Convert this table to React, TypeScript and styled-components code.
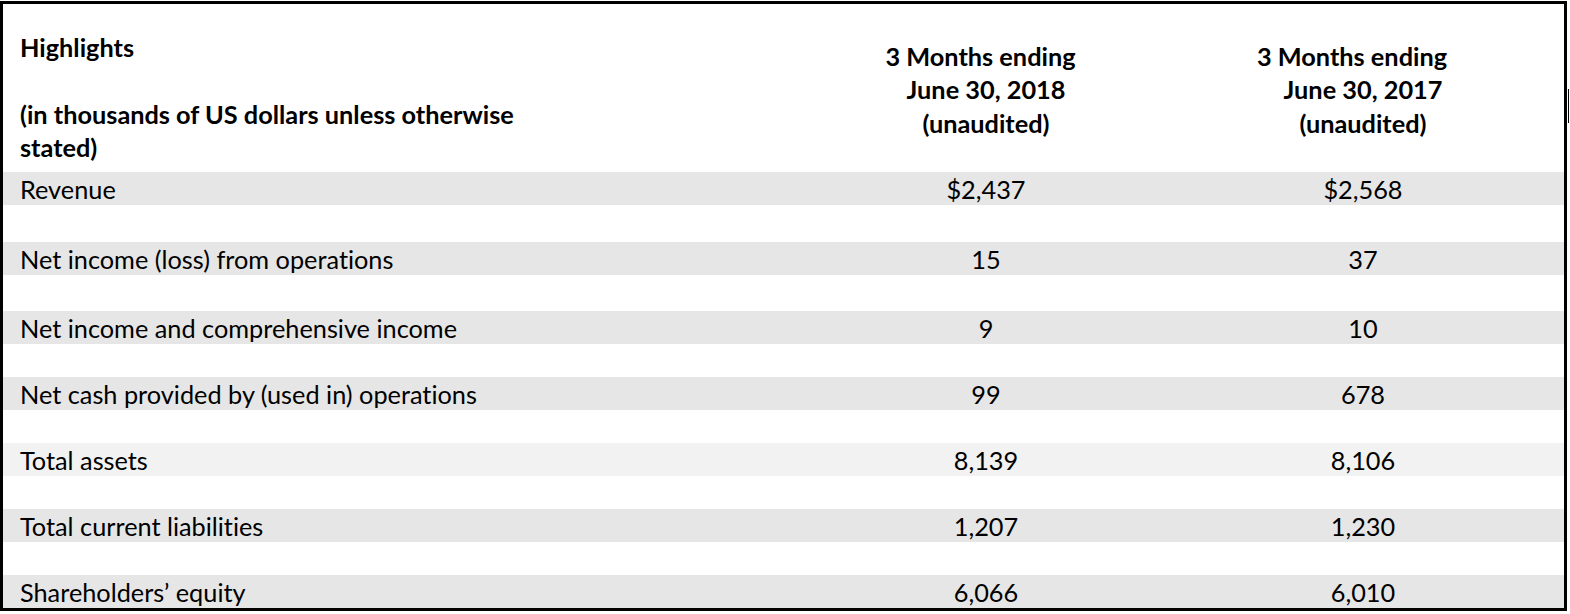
import React from "react";
import styled, { createGlobalStyle } from "styled-components";

const GlobalStyle = createGlobalStyle`
  html, body {
    margin: 0;
    padding: 0;
    background: #ffffff;
  }
  body {
    font-family: Lato, "Open Sans", "Liberation Sans", sans-serif;
    font-variant-ligatures: none;
    font-feature-settings: "liga" 0, "clig" 0;
    color: #000000;
  }
`;

const Page = styled.div`
  position: relative;
  width: 1570px;
  height: 614px;
  padding-top: 1px;
  box-sizing: border-box;
  overflow: hidden;
`;

const Table = styled.div`
  width: 1567px;
  box-sizing: border-box;
  border: 3px solid #000000;
  display: grid;
  grid-template-columns: 807px 352px 402px;
  font-size: 25.3px;
`;

const HeaderCell = styled.div<{ $align: "left" | "center"; $top: number }>`
  display: flex;
  flex-direction: column;
  align-items: ${(p) => (p.$align === "left" ? "flex-start" : "center")};
  padding-top: ${(p) => p.$top}px;
  padding-left: ${(p) => (p.$align === "left" ? 17 : 0)}px;
  height: 168px;
  box-sizing: border-box;
  font-weight: 700;
  line-height: 33.4px;
`;

const HeaderLine = styled.span<{ $shift?: number }>`
  display: block;
  white-space: pre;
  padding-right: ${(p) => (p.$shift && p.$shift < 0 ? -2 * p.$shift : 0)}px;
  padding-left: ${(p) => (p.$shift && p.$shift > 0 ? 2 * p.$shift : 0)}px;
`;

const BlankLine = styled.span`
  display: block;
  height: 33.4px;
`;

const Band = styled.div<{ $tone: "mid" | "light" }>`
  grid-column: 1 / -1;
  display: grid;
  grid-template-columns: subgrid;
  height: 33px;
  align-items: center;
  background: ${(p) => (p.$tone === "light" ? "#f2f2f2" : "#e6e6e6")};
`;

const LabelCell = styled.div`
  padding-left: 17px;
  white-space: nowrap;
`;

const ValueCell = styled.div`
  text-align: center;
  white-space: nowrap;
`;

const Spacer = styled.div<{ $h: number }>`
  grid-column: 1 / -1;
  height: ${(p) => p.$h}px;
`;

const CaretMark = styled.div`
  position: absolute;
  left: 1568px;
  top: 89px;
  width: 1px;
  height: 34px;
  background: #000000;
`;

type Row = {
  label: string;
  a: string;
  b: string;
  tone: "mid" | "light";
  gap: number;
};

const rows: Row[] = [
  { label: "Revenue", a: "$2,437", b: "$2,568", tone: "mid", gap: 37 },
  { label: "Net income (loss) from operations", a: "15", b: "37", tone: "mid", gap: 36 },
  { label: "Net income and comprehensive income", a: "9", b: "10", tone: "mid", gap: 33 },
  { label: "Net cash provided by (used in) operations", a: "99", b: "678", tone: "mid", gap: 33 },
  { label: "Total assets", a: "8,139", b: "8,106", tone: "light", gap: 33 },
  { label: "Total current liabilities", a: "1,207", b: "1,230", tone: "mid", gap: 33 },
  { label: "Shareholders\u2019 equity", a: "6,066", b: "6,010", tone: "mid", gap: 0 },
];

export default function App() {
  return (
    <Page>
      <GlobalStyle />
      <Table>
        <HeaderCell $align="left" $top={27}>
          <HeaderLine>Highlights</HeaderLine>
          <BlankLine />
          <HeaderLine>(in thousands of US dollars unless otherwise</HeaderLine>
          <HeaderLine>stated)</HeaderLine>
        </HeaderCell>
        <HeaderCell $align="center" $top={36}>
          <HeaderLine $shift={-5.5}>3 Months ending</HeaderLine>
          <HeaderLine>June 30, 2018</HeaderLine>
          <HeaderLine>(unaudited)</HeaderLine>
        </HeaderCell>
        <HeaderCell $align="center" $top={36}>
          <HeaderLine $shift={-11}>3 Months ending</HeaderLine>
          <HeaderLine>June 30, 2017</HeaderLine>
          <HeaderLine>(unaudited)</HeaderLine>
        </HeaderCell>
        {rows.map((r) => (
          <React.Fragment key={r.label}>
            <Band $tone={r.tone}>
              <LabelCell>{r.label}</LabelCell>
              <ValueCell>{r.a}</ValueCell>
              <ValueCell>{r.b}</ValueCell>
            </Band>
            {r.gap > 0 && <Spacer $h={r.gap} />}
          </React.Fragment>
        ))}
      </Table>
      <CaretMark />
    </Page>
  );
}
